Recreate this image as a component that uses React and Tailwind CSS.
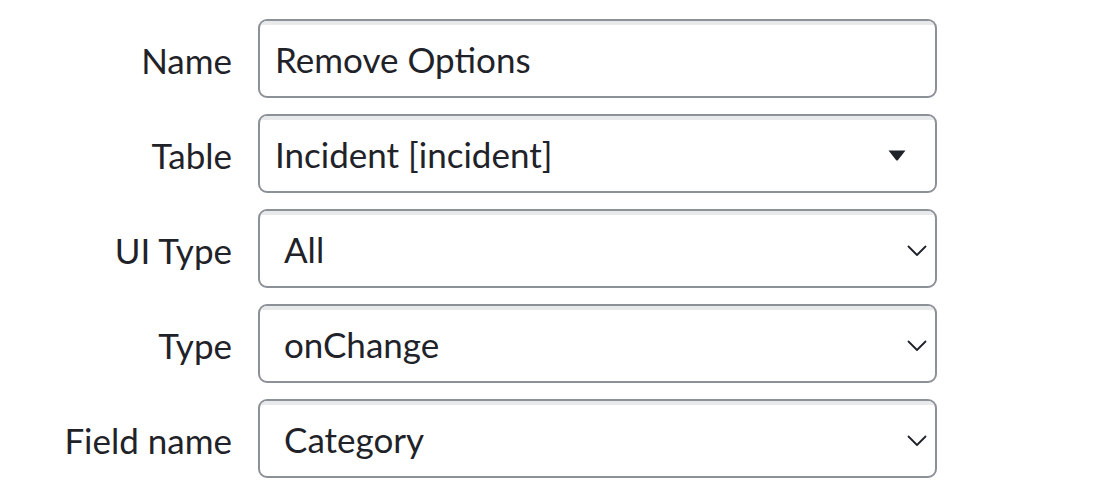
import React from 'react';

const Chevron = () => (
  <svg width="20" height="12" viewBox="0 0 20 12" fill="none" className="shrink-0">
    <path d="M1.5 1.5 L10 10 L18.5 1.5" stroke="#1f2329" strokeWidth="1.8" strokeLinecap="round" strokeLinejoin="round" />
  </svg>
);

const Caret = () => (
  <svg width="18" height="11" viewBox="0 0 18 11" className="shrink-0">
    <path d="M0.5 0.5 L17.5 0.5 L10 10 Q9 11 8 10 Z" fill="#1f2329" />
  </svg>
);

const fields = [
  { label: 'Name', value: 'Remove Options', kind: 'input' },
  { label: 'Table', value: 'Incident [incident]', kind: 'ref' },
  { label: 'UI Type', value: 'All', kind: 'select' },
  { label: 'Type', value: 'onChange', kind: 'select' },
  { label: 'Field name', value: 'Category', kind: 'select' },
];

const Field = ({ label, value, kind }) => (
  <div className="flex items-center">
    <label className="w-[232px] text-right text-[35px] leading-none text-[#1f2329] mt-[4px]">{label}</label>
    <div className="ml-[26px] w-[679px] h-[79px] rounded-[9px] border-2 border-[#8c9097] bg-white overflow-hidden flex flex-col">
      <div className="h-[4px] bg-[#e7e9eb] shrink-0" />
      <div className={`flex-1 flex items-center ${kind === 'select' ? 'pl-[24px] pr-[8px]' : kind === 'ref' ? 'pl-[15px] pr-[29px]' : 'pl-[15px] pr-4'}`}>
        <span className="flex-1 text-[35px] text-[#1f2329] leading-none -mt-[2px]">{value}</span>
        {kind === 'select' && <Chevron />}
        {kind === 'ref' && <Caret />}
      </div>
    </div>
  </div>
);

export default function App() {
  return (
    <div className="w-[1108px] h-[492px] bg-white pt-[19px] flex flex-col gap-[16px]" style={{ fontFamily: 'Lato, "Liberation Sans", sans-serif' }}>
      {fields.map((f) => (
        <Field key={f.label} {...f} />
      ))}
    </div>
  );
}
